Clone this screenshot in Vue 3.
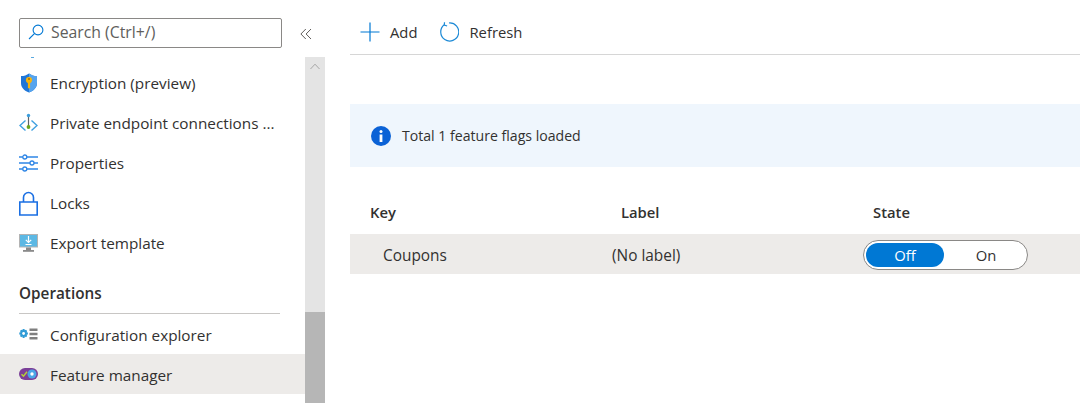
<template>
  <div class="page">
    <aside class="side">
      <div class="search-row">
        <div class="search">
          <svg class="search-icon" width="16" height="16" viewBox="0 0 16 16" fill="none" stroke="#0078d4" stroke-width="1.1">
            <circle cx="10" cy="6" r="4.9" />
            <path d="M6.400 9.600 1 15" />
          </svg>
          <span>Search (Ctrl+/)</span>
        </div>
        <svg class="collapse" width="12" height="12" viewBox="0 0 12 12" fill="none" stroke="#605e5c" stroke-width="1">
          <path d="M5.800 1 .9 6l4.900 5M11 1 6.100 6l4.900 5" />
        </svg>
      </div>
      <div class="side-body">
        <nav class="nav">
          <div class="stub"></div>
          <div v-for="item in topItems" :key="item.label" class="nav-item">
            <span class="nav-icon">
              <svg v-if="item.icon === 'shield'" width="18" height="20" viewBox="0 0 18 20">
                <path d="M9 .5c2.300 1.700 4.800 2.500 8 2.600V10c0 4.500-3.200 7.700-8 9.500C4.200 17.700 1 14.500 1 10V3.100C4.200 3 6.700 2.200 9 .5z" fill="#1f76d8" />
                <path d="M9 .5c2.300 1.700 4.800 2.500 8 2.600V10c0 4.500-3.200 7.700-8 9.500z" fill="#56a4ee" />
                <circle cx="9" cy="7" r="3.100" fill="#f6b40e" />
                <path d="M7.900 9h2.200v5.500L9 15.800l-1.100-1.300z" fill="#f6b40e" />
                <circle cx="9" cy="6" r="1" fill="#a86f00" />
              </svg>
              <svg v-else-if="item.icon === 'endpoint'" width="19" height="20" viewBox="0 0 19 20" fill="none">
                <path d="M6.500 7.500 1 12.500l5.500 5M12.500 7.500l5.500 5-5.500 5" stroke="#3fa0e0" stroke-width="1.400" />
                <path d="M9.500 3v10" stroke="#5f6368" stroke-width="1.200" />
                <circle cx="9.500" cy="2.500" r="1.700" fill="#3b9ede" />
                <circle cx="9.500" cy="14" r="1.900" fill="#69a51d" />
              </svg>
              <svg v-else-if="item.icon === 'sliders'" width="19" height="18" viewBox="0 0 19 18" fill="none" stroke="#2f86e6" stroke-width="1.300">
                <path d="M0 3h3.800M8 3h11M0 9h11M15 9h4M0 15h3.800M8 15h11" />
                <circle cx="5.800" cy="3" r="2" />
                <circle cx="13" cy="9" r="2" />
                <circle cx="5.800" cy="15" r="2" />
              </svg>
              <svg v-else-if="item.icon === 'lock'" width="19" height="25" viewBox="0 0 19 25" fill="none" stroke="#1a6fe3" stroke-width="1.600">
                <path d="M4.500 11V6.500a5 5 0 0 1 10 0V11" />
                <path d="M.8 11h17.400v13H.8z" />
              </svg>
              <svg v-else width="19" height="18" viewBox="0 0 19 18">
                <path d="M0 0h19v13.500H0z" fill="#b3b3b3" />
                <path d="M1 1h17v11.500H1z" fill="#5cb8e4" />
                <path d="M7 13.500h5V16H7z" fill="#8a8a8a" />
                <path d="M4 16h11v1.800H4z" fill="#8a8a8a" />
                <path d="M9.500 2v6M6.800 5.800l2.700 2.700 2.700-2.700" fill="none" stroke="#fff" stroke-width="1.200" />
                <path d="M6.500 10h6v1h-6z" fill="#fff" />
              </svg>
            </span>
            <span class="nav-label">{{ item.label }}</span>
          </div>
          <div class="group-title">Operations</div>
          <div class="nav-item ops">
            <span class="nav-icon">
              <svg width="19" height="12" viewBox="0 0 19 12">
                <path d="M3.700 1h1.800l.3 1.300 1.200-.5 1.200 1.200-.6 1.200 1.300.4v1.800l-1.300.3.600 1.200-1.200 1.300-1.200-.6-.3 1.300H3.700l-.3-1.300-1.200.6L1 7.900l.6-1.200L.3 6.400V4.600l1.300-.4L1 3l1.200-1.200 1.200.5z" fill="#2f9bd6" />
                <circle cx="4.600" cy="5.500" r="1.400" fill="#fff" />
                <path d="M10.500 .5h8v2.500h-8zM10.500 4.700h8v2.500h-8zM10.500 8.900h8v2.500h-8z" fill="#7f7f7f" />
              </svg>
            </span>
            <span class="nav-label">Configuration explorer</span>
          </div>
          <div class="nav-item ops active">
            <span class="nav-icon">
              <svg width="19" height="12" viewBox="0 0 19 12">
                <rect x="0" y="0" width="19" height="12" rx="6" fill="#7b3f98" />
                <path d="M2.500 6.200 4.500 8.300 8 3.800" fill="none" stroke="#b5d334" stroke-width="1.400" />
                <circle cx="13" cy="6" r="4.500" fill="#4aa6e8" />
                <circle cx="13" cy="6" r="1.700" fill="#fff" />
              </svg>
            </span>
            <span class="nav-label">Feature manager</span>
          </div>
        </nav>
        <div class="scrollbar">
          <svg class="scroll-up" width="10" height="7" viewBox="0 0 10 7" fill="none" stroke="#a6a6a6" stroke-width="1">
            <path d="M.5 6 5 1.200 9.500 6" />
          </svg>
          <div class="scroll-thumb"></div>
        </div>
      </div>
    </aside>

    <main class="main">
      <div class="toolbar">
        <div class="tool">
          <svg width="20" height="20" viewBox="0 0 20 20" fill="none" stroke="#0078d4" stroke-width="1.200">
            <path d="M10 .5v19M.5 10h19" />
          </svg>
          <span>Add</span>
        </div>
        <div class="tool">
          <svg width="20" height="20" viewBox="0 0 20 20" fill="none" stroke="#1e8ad6" stroke-width="1.200">
            <path d="M5.300 2.800A9 9 0 1 0 10 1" />
            <path d="M5.500 .2 5.300 3l2.800 1" />
          </svg>
          <span>Refresh</span>
        </div>
      </div>

      <div class="banner">
        <svg width="20" height="20" viewBox="0 0 20 20">
          <circle cx="10" cy="10" r="10" fill="#0b62d6" />
          <circle cx="10" cy="5.500" r="1.500" fill="#fff" />
          <path d="M8.600 8.500h2.800V16H8.600z" fill="#fff" />
        </svg>
        <span>Total 1 feature flags loaded</span>
      </div>

      <div class="table">
        <div class="thead">
          <div class="th">Key</div>
          <div class="th">Label</div>
          <div class="th">State</div>
        </div>
        <div class="tr">
          <div class="td key">Coupons</div>
          <div class="td label">(No label)</div>
          <div class="td">
            <div class="toggle">
              <div class="opt on">Off</div>
              <div class="opt">On</div>
            </div>
          </div>
        </div>
      </div>
    </main>
  </div>
</template>

<script setup>
const topItems = [
  { label: 'Encryption (preview)', icon: 'shield' },
  { label: 'Private endpoint connections ...', icon: 'endpoint' },
  { label: 'Properties', icon: 'sliders' },
  { label: 'Locks', icon: 'lock' },
  { label: 'Export template', icon: 'export' }
]
</script>

<style>
html,
body {
  margin: 0;
  background: #fff;
}
</style>

<style scoped>
.page {
  display: flex;
  width: 1080px;
  height: 403px;
  overflow: hidden;
  font-family: "Open Sans", "Noto Sans", "Liberation Sans", sans-serif;
  font-size: 14.8px;
  color: #323130;
  background: #fff;
}

.side {
  flex: 0 0 325px;
  display: flex;
  flex-direction: column;
}

.search-row {
  flex: 0 0 57px;
  display: flex;
  align-items: flex-start;
  padding: 18px 0 0 19px;
  box-sizing: border-box;
}

.search {
  width: 263px;
  height: 30px;
  box-sizing: border-box;
  border: 1px solid #8a8886;
  border-radius: 2px;
  display: flex;
  align-items: center;
  padding: 0 0 2px 8px;
  gap: 7px;
  font-size: 15.8px;
  color: #605e5c;
}

.collapse {
  margin: 10px 0 0 18px;
}

.side-body {
  flex: 1;
  display: flex;
  min-height: 0;
}

.nav {
  width: 305px;
  font-size: 15.3px;
}

.stub {
  height: 6px;
}

.stub::before {
  content: "";
  display: block;
  width: 3px;
  height: 1px;
  margin-left: 31px;
  background: #59a9e0;
}

.nav-item {
  height: 40px;
  display: flex;
  align-items: center;
  padding-left: 19px;
}

.nav-item.active {
  background: #edebe9;
}

.nav-item.ops .nav-label {
  padding-top: 2px;
}

.nav-icon {
  width: 19px;
  height: 26px;
  margin-right: 12px;
  display: flex;
  align-items: center;
  justify-content: center;
}

.nav-label {
  white-space: nowrap;
}

.group-title {
  margin: 20px 25px 0 19px;
  height: 31px;
  line-height: 21px;
  box-sizing: border-box;
  border-bottom: 1px solid #c8c6c4;
  font-weight: 600;
}

.scrollbar {
  width: 20px;
  position: relative;
  background: #e4e4e4;
}

.scroll-up {
  position: absolute;
  top: 6px;
  left: 5px;
}

.scroll-thumb {
  position: absolute;
  left: 0;
  right: 0;
  top: 255px;
  bottom: 0;
  background: #b6b6b6;
}

.main {
  flex: 1;
  min-width: 0;
  padding-left: 25px;
}

.toolbar {
  height: 55px;
  box-sizing: border-box;
  border-bottom: 1px solid #d6d6d6;
  display: flex;
  align-items: center;
  gap: 22px;
  padding: 10px 0 0 10px;
}

.tool {
  display: flex;
  align-items: center;
  gap: 10px;
}

.banner {
  margin-top: 49px;
  height: 63px;
  background: #eff6fd;
  display: flex;
  align-items: center;
  gap: 11px;
  padding-left: 21px;
  font-size: 14.1px;
}

.table {
  margin-top: 27px;
}

.thead,
.tr {
  display: grid;
  grid-template-columns: 251px 252px 1fr;
}

.thead {
  height: 40px;
  box-sizing: border-box;
  align-items: center;
  padding: 0 0 4px 20px;
  font-weight: 600;
}

.tr {
  height: 40px;
  padding-left: 20px;
  background: #edebe9;
  align-items: center;
  font-size: 15.4px;
}

.td.key {
  padding: 2px 0 0 13px;
}

.td.label {
  margin-left: -9px;
  padding-top: 2px;
}

.toggle {
  width: 165px;
  height: 30px;
  margin: 2px 0 0 -10px;
  box-sizing: border-box;
  border: 1px solid #8a8886;
  border-radius: 15px;
  background: #fff;
  display: flex;
  padding: 2px;
  gap: 3px;
  font-size: 14.8px;
}

.opt {
  flex: 1;
  border-radius: 12px;
  display: flex;
  align-items: center;
  justify-content: center;
  background: #fff;
}

.opt.on {
  background: #0078d4;
  color: #fff;
}
</style>
